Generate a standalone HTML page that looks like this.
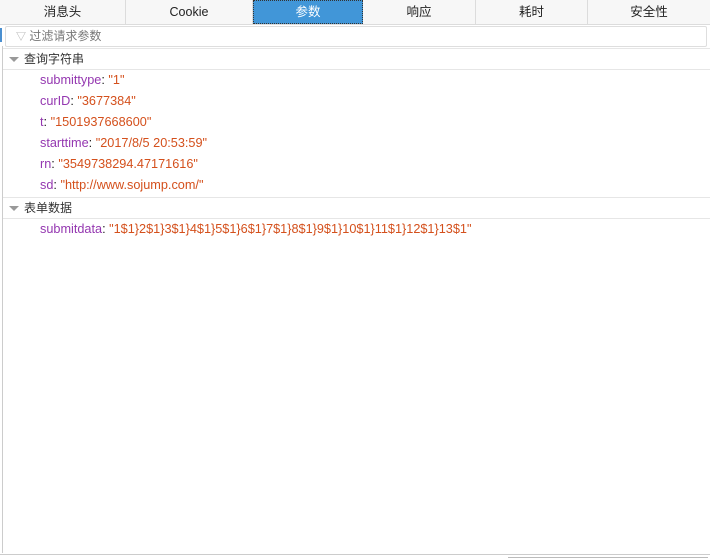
<!DOCTYPE html>
<html><head><meta charset="utf-8"><style>
body{margin:0;width:710px;height:560px;background:#fff;font-family:"Liberation Sans","Noto Sans CJK SC",sans-serif;font-size:12px;color:#222;position:relative;overflow:hidden}
.tabs{position:absolute;left:0;top:0;width:710px;height:24px;background:#f7f7f7;border-bottom:1px solid #dcdcdc}
.tab{position:absolute;top:0;height:24px;line-height:25px;text-align:center;border-right:1px solid #dcdcdc;font-size:12.5px;color:#222}
.act{background:#4196d8;color:#fff;border:1px dotted #333;box-sizing:border-box;line-height:23px}
.filter{position:absolute;left:5px;top:26px;width:700px;height:19px;border:1px solid #dedede;border-radius:2px;color:#777;line-height:19px;font-size:12px}
.vl{position:absolute;left:2px;top:46px;width:1px;height:507px;background:#ccc}
.hdr{position:absolute;left:3px;width:707px;height:20px;line-height:20px;border-top:1px solid #e6e6e6;border-bottom:1px solid #e6e6e6;color:#333}
.hdr .tri{position:absolute;left:6px;top:8px;width:0;height:0;border-left:5px solid transparent;border-right:5px solid transparent;border-top:5px solid #999}
.hdr span{position:absolute;left:21px}
.row{position:absolute;left:40px;height:21px;line-height:21px;white-space:nowrap;font-size:12.7px}
.k{color:#9437b0}.v{color:#d4501c}
</style></head><body>
<div class="tabs">
<div class="tab" style="left:0;width:125px">消息头</div>
<div class="tab" style="left:126px;width:126px">Cookie</div>
<div class="tab act" style="left:253px;width:110px">参数</div>
<div class="tab" style="left:363px;width:112px">响应</div>
<div class="tab" style="left:476px;width:111px">耗时</div>
<div class="tab" style="left:588px;width:122px;border-right:none">安全性</div>
</div>
<div style="position:absolute;left:0;top:28px;width:2px;height:14px;background:#4a8fd0"></div>
<div class="filter"><span style="color:#aaa;margin-left:10px;font-size:10px">▽</span> 过滤请求参数</div>
<div class="vl"></div>
<div class="hdr" style="top:48px"><div class="tri"></div><span>查询字符串</span></div>
<div class="row" style="top:70px"><span class="k">submittype</span>: <span class="v">"1"</span></div>
<div class="row" style="top:91px"><span class="k">curID</span>: <span class="v">"3677384"</span></div>
<div class="row" style="top:112px"><span class="k">t</span>: <span class="v">"1501937668600"</span></div>
<div class="row" style="top:133px"><span class="k">starttime</span>: <span class="v">"2017/8/5 20:53:59"</span></div>
<div class="row" style="top:154px"><span class="k">rn</span>: <span class="v">"3549738294.47171616"</span></div>
<div class="row" style="top:175px"><span class="k">sd</span>: <span class="v">"http://www.sojump.com/"</span></div>
<div class="hdr" style="top:197px"><div class="tri"></div><span>表单数据</span></div>
<div class="row" style="top:219px"><span class="k">submitdata</span>: <span class="v">"1$1}2$1}3$1}4$1}5$1}6$1}7$1}8$1}9$1}10$1}11$1}12$1}13$1"</span></div>
<div style="position:absolute;left:0;top:554px;width:710px;height:1px;background:#ccc"></div>
<div style="position:absolute;left:508px;top:557px;width:200px;height:1px;background:#bbb"></div>
</body></html>
